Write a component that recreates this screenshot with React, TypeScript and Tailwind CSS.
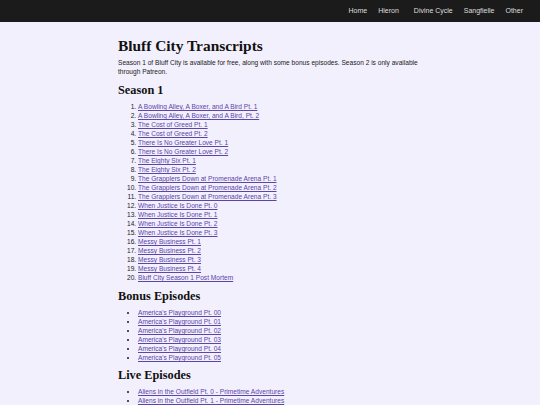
import React from "react";

const season1 = [
  "A Bowling Alley, A Boxer, and A Bird Pt. 1",
  "A Bowling Alley, A Boxer, and A Bird, Pt. 2",
  "The Cost of Greed Pt. 1",
  "The Cost of Greed Pt. 2",
  "There Is No Greater Love Pt. 1",
  "There Is No Greater Love Pt. 2",
  "The Eighty Six Pt. 1",
  "The Eighty Six Pt. 2",
  "The Grapplers Down at Promenade Arena Pt. 1",
  "The Grapplers Down at Promenade Arena Pt. 2",
  "The Grapplers Down at Promenade Arena Pt. 3",
  "When Justice Is Done Pt. 0",
  "When Justice Is Done Pt. 1",
  "When Justice Is Done Pt. 2",
  "When Justice Is Done Pt. 3",
  "Messy Business Pt. 1",
  "Messy Business Pt. 2",
  "Messy Business Pt. 3",
  "Messy Business Pt. 4",
  "Bluff City Season 1 Post Mortem",
];

const bonus = [
  "America's Playground Pt. 00",
  "America's Playground Pt. 01",
  "America's Playground Pt. 02",
  "America's Playground Pt. 03",
  "America's Playground Pt. 04",
  "America's Playground Pt. 05",
];

const live = [
  "Aliens in the Outfield Pt. 0 - Primetime Adventures",
  "Aliens in the Outfield Pt. 1 - Primetime Adventures",
  "Aliens in the Outfield Pt. 2 - Primetime Adventures",
];

const linkCls = "text-[#5b45a8] underline decoration-[0.5px] underline-offset-1";

function Heading({ children }: { children: React.ReactNode }) {
  return (
    <h2 className="font-bold text-[#111] text-[12.3px] leading-[14px] font-['Georgia','Liberation_Serif',serif]">
      {children}
    </h2>
  );
}

export default function App() {
  return (
    <div className="min-h-[405px] bg-[#f3f0fd] font-['Liberation_Sans',Arial,sans-serif] text-[#1a1a1a]">
      <nav className="h-[22px] bg-[#1b1b1b] flex items-center justify-end pr-[17px] text-[7px] text-[#dedede]">
        <span>Home</span>
        <span className="ml-[11px]">Hieron</span>
        <span className="ml-[15px]">Divine Cycle</span>
        <span className="ml-[11px]">Sangfielle</span>
        <span className="ml-[11px]">Other</span>
      </nav>
      <main className="w-[304px] mx-auto pt-[14px]">
        <h1 className="font-bold text-[#111] text-[15.4px] leading-[20px] font-['Georgia','Liberation_Serif',serif]">
          Bluff City Transcripts
        </h1>
        <p className="mt-[2px] text-[6.6px] leading-[9px]">
          Season 1 of Bluff City is available for free, along with some bonus episodes. Season 2 is only available
          through Patreon.
        </p>
        <div className="mt-[7px]">
          <Heading>Season 1</Heading>
        </div>
        <ol className="mt-[5px] list-decimal pl-[20px] text-[6.6px] leading-[9px]">
          {season1.map((t) => (
            <li key={t}>
              <a className={linkCls}>{t}</a>
            </li>
          ))}
        </ol>
        <div className="mt-[7px]">
          <Heading>Bonus Episodes</Heading>
        </div>
        <ul className="mt-[5px] list-disc pl-[20px] text-[6.6px] leading-[9px]">
          {bonus.map((t) => (
            <li key={t}>
              <a className={linkCls}>{t}</a>
            </li>
          ))}
        </ul>
        <div className="mt-[6px]">
          <Heading>Live Episodes</Heading>
        </div>
        <ul className="mt-[5px] list-disc pl-[20px] text-[6.6px] leading-[9px]">
          {live.map((t) => (
            <li key={t}>
              <a className={linkCls}>{t}</a>
            </li>
          ))}
        </ul>
      </main>
    </div>
  );
}
